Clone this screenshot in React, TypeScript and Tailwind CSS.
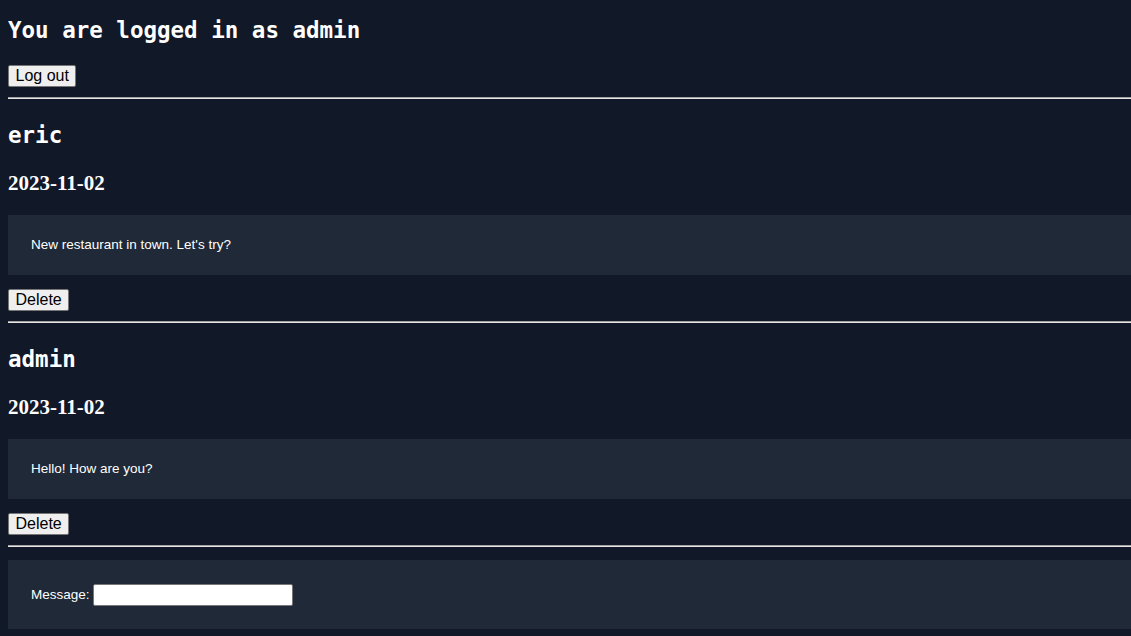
import { useState } from 'react';

const posts = [
  { id: 1, author: 'eric', date: '2023-11-02', text: "New restaurant in town. Let's try?" },
  { id: 2, author: 'admin', date: '2023-11-02', text: 'Hello! How are you?' },
];

const mono = "font-['DejaVu_Sans_Mono',monospace]";
const btn =
  "block h-[22px] px-[6.5px] bg-[#efefef] text-black border border-[#767676] rounded-[2px] text-[16px] leading-[20px] font-['Liberation_Sans',Arial,sans-serif]";

function Rule() {
  return <div className="border-t border-t-[#a3a3a3] border-b border-b-[#e5e5e5]" />;
}

export default function App() {
  const [message, setMessage] = useState('');

  return (
    <div className="min-h-screen bg-[#111827] text-white pl-2 pb-2 overflow-hidden">
      <h1 className={`${mono} mt-[16px] h-[28px] text-[22.5px] leading-[28px] font-bold`}>
        You are logged in as admin
      </h1>
      <button className={`${btn} mt-[21px]`}>Log out</button>
      <div className="mt-[10px]">
        <Rule />
      </div>

      {posts.map((p) => (
        <div key={p.id}>
          <h2 className={`${mono} mt-[22px] h-[28px] text-[22.5px] leading-[28px] font-bold`}>
            {p.author}
          </h2>
          <h3 className="mt-[22px] h-[24px] text-[21px] leading-[24px] font-bold font-['Liberation_Serif',serif]">
            {p.date}
          </h3>
          <div className="mt-[20px] h-[60px] bg-[#1f2937] flex items-center pl-[23px] text-[13.5px] font-['Liberation_Sans',Arial,sans-serif]">
            {p.text}
          </div>
          <button className={`${btn} mt-[14px]`}>Delete</button>
          <div className="mt-[10px]">
            <Rule />
          </div>
        </div>
      ))}

      <form
        className="mt-[13px] h-[69px] bg-[#1f2937] flex items-center pl-[23px] pt-px text-[13.5px] font-['Liberation_Sans',Arial,sans-serif]"
        onSubmit={(e) => e.preventDefault()}
      >
        <label htmlFor="msg">Message:</label>
        <input
          id="msg"
          value={message}
          onChange={(e) => setMessage(e.target.value)}
          className="ml-[3px] w-[200px] h-[22px] bg-white text-black border border-[#767676] rounded-[2px] px-1 text-[13px]"
        />
      </form>
    </div>
  );
}
